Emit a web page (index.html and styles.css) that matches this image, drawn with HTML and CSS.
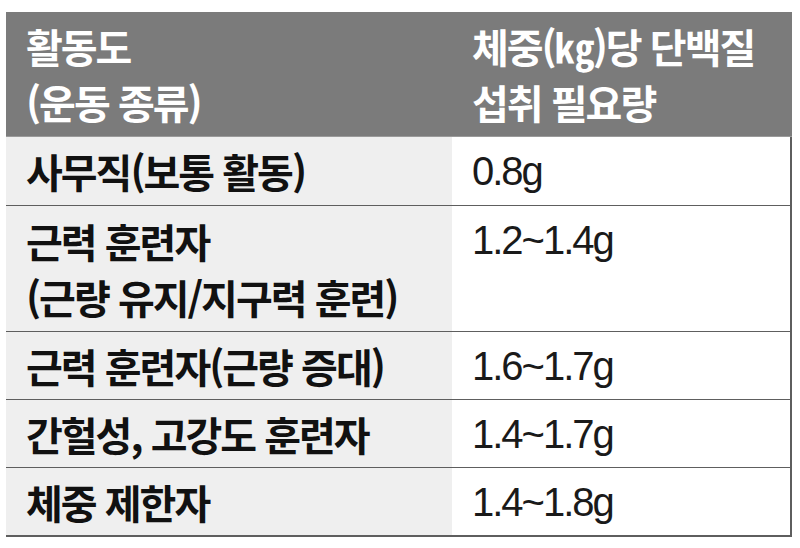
FILE: index.html
```html
<!DOCTYPE html>
<html lang="ko">
<head>
<meta charset="utf-8">
<link rel="stylesheet" href="styles.css">
</head>
<body>
<div class="table">
  <div class="cell head left">활동도<br>(운동 종류)</div>
  <div class="cell head right">체중(㎏)당 단백질<br>섭취 필요량</div>

  <div class="cell label">사무직(보통 활동)</div>
  <div class="cell value">0.8g</div>

  <div class="cell label">근력 훈련자<br>(근량 유지/지구력 훈련)</div>
  <div class="cell value top">1.2~1.4g</div>

  <div class="cell label">근력 훈련자(근량 증대)</div>
  <div class="cell value">1.6~1.7g</div>

  <div class="cell label">간헐성, 고강도 훈련자</div>
  <div class="cell value">1.4~1.7g</div>

  <div class="cell label last">체중 제한자</div>
  <div class="cell value last">1.4~1.8g</div>
</div>
</body>
</html>
```

FILE: styles.css
```css
html, body {
  margin: 0;
  padding: 0;
  background: #ffffff;
}

body {
  padding: 12px 0 0 6px;
}

.table {
  display: grid;
  grid-template-columns: 446px 340px;
  grid-template-rows: 125px 69px 126px 68px 68px 69px;
  width: 786px;
}

.cell {
  display: flex;
  flex-direction: column;
  justify-content: center;
  box-sizing: border-box;
  padding-left: 20px;
  line-height: 56px;
  border-bottom: 1.5px solid #5e5e5e;
}

.head {
  background: #7b7b7b;
  color: #ffffff;
  font-family: "Noto Sans CJK KR", "Noto Sans", sans-serif;
  font-weight: 700;
  font-size: 40px;
  letter-spacing: -2px;
  border-bottom: 1px solid #9a9a9a;
  padding-top: 0;
}

.label {
  background: #efefef;
  color: #111111;
  font-family: "Noto Sans CJK KR", "Noto Sans", sans-serif;
  font-weight: 700;
  font-size: 40px;
  letter-spacing: -2px;
}

.value {
  background: #ffffff;
  color: #1a1a1a;
  font-family: "Liberation Sans", Arial, sans-serif;
  font-weight: 400;
  font-size: 40px;
  letter-spacing: -2px;
  border-right: 2px solid #5e5e5e;
}

.value.top {
  justify-content: flex-start;
  padding-top: 6px;
}

.last {
  border-bottom-width: 2px;
}
```
